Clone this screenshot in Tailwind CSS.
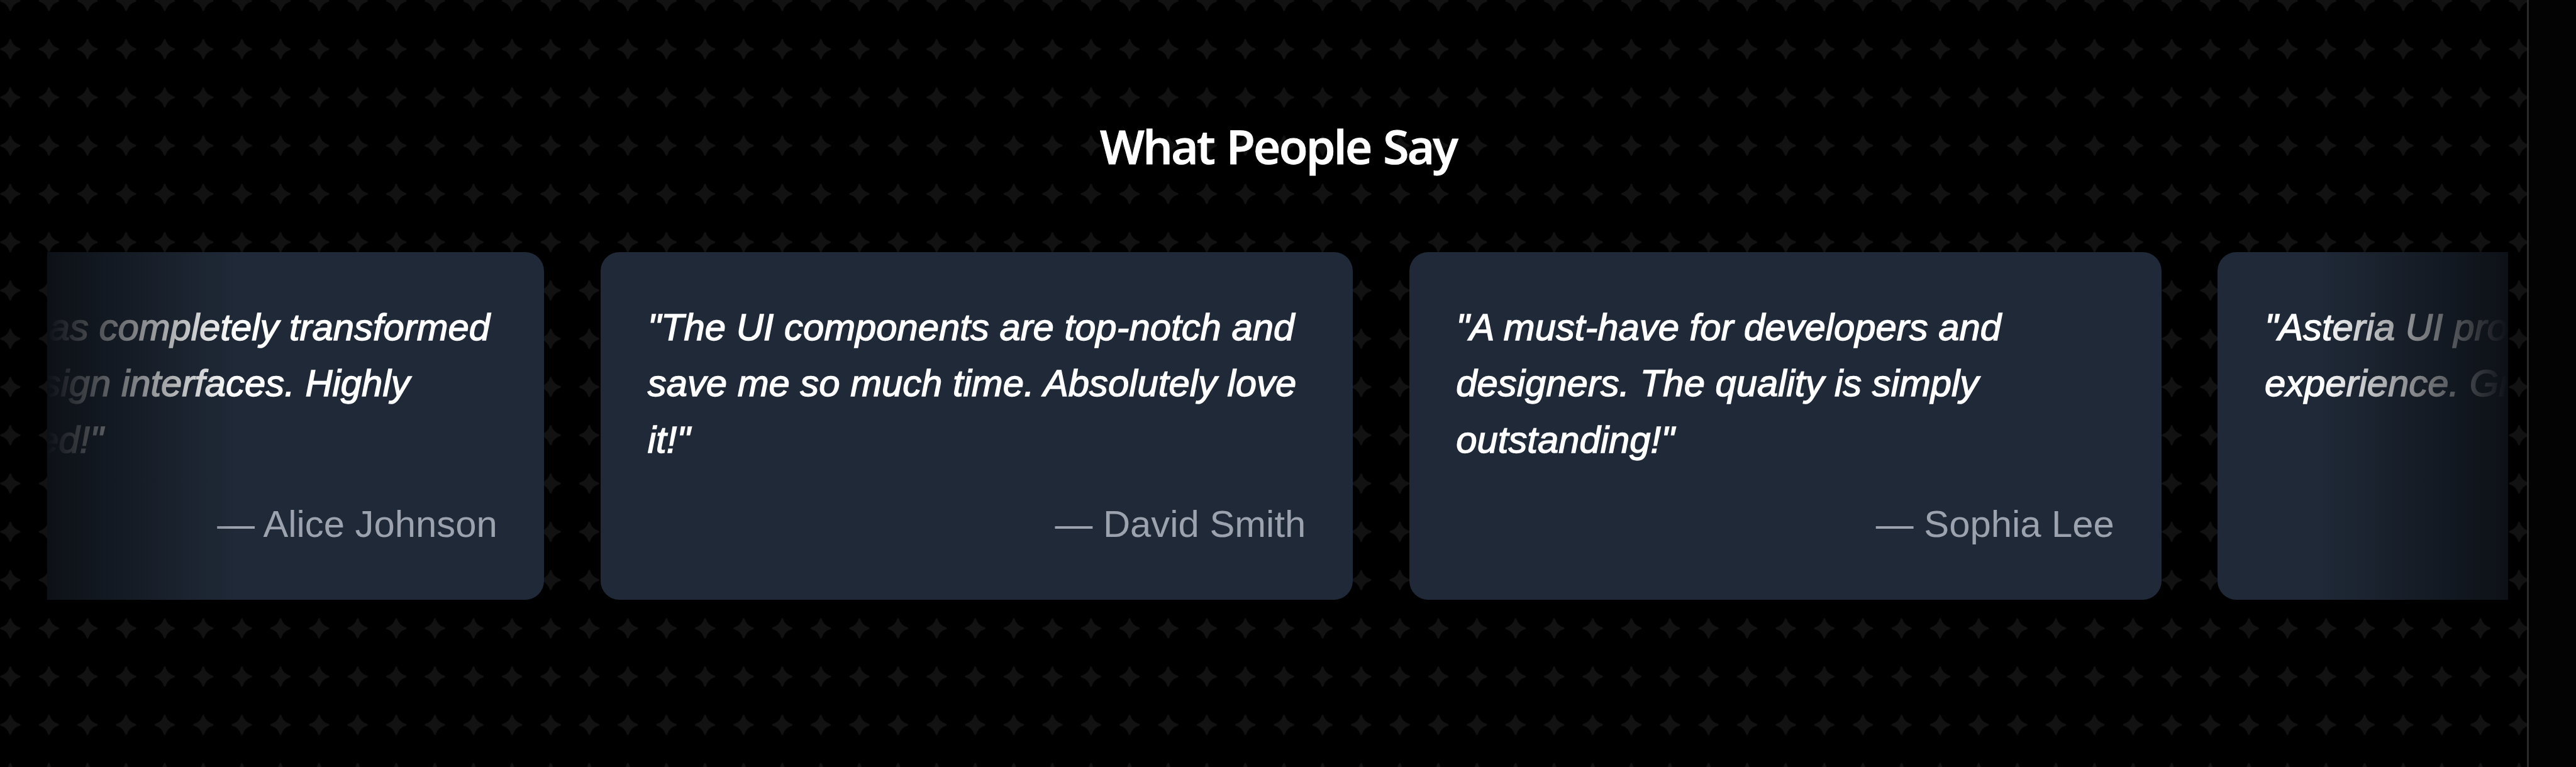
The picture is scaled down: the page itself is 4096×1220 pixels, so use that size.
<!DOCTYPE html>
<html lang="en">
<head>
<meta charset="utf-8">
<title>Testimonials</title>
<script src="https://cdn.jsdelivr.net/npm/@tailwindcss/browser@4"></script>
</head>
<body class="relative flex h-[1220px] w-[4096px] overflow-hidden bg-black">
<svg class="absolute inset-0 h-full w-full" aria-hidden="true">
<defs><pattern id="stars" x="-14.3" y="-37" width="61.37" height="76.77" patternUnits="userSpaceOnUse">
<path transform="translate(30.7 38.4)" fill="#121212" d="M-1-16H1Q4-4.5 16-1V1Q4 4.5 1 16H-1Q-4 4.5-16 1V-1Q-4-4.5-1-16Z"/></pattern></defs>
<rect width="4019" height="1220" fill="url(#stars)"/>
</svg>
<main class="relative flex w-[4021px] shrink-0 flex-col border-r-[3px] border-[#2a2a2a] pt-[182px] pr-[28px] pl-[75px]">
<h2 class="h-[219px] text-center font-['Open_Sans','Noto_Sans',sans-serif] text-[75px] leading-[100px] font-semibold tracking-[-2.7px] text-white [word-spacing:3px] [-webkit-text-stroke:1px_white]">What People Say</h2>
<section class="relative flex h-[553px] w-[3913px] overflow-hidden font-['Liberation_Sans',Arial,sans-serif] text-[59.8px] leading-[89.7px]">
<div class="-ml-[405.5px] flex shrink-0 gap-[89.7px] text-white">
<article class="flex w-[1195.9px] shrink-0 flex-col rounded-[30px] bg-[#1f2937] px-[74.7px] pt-[74.7px]">
<p class="h-[313.6px] whitespace-nowrap italic [-webkit-text-stroke:1.4px_white]">"Asteria UI has completely transformed<br>the way I design interfaces. Highly<br>recommended!"</p>
<p class="text-right text-[#9ca3af]">— Alice Johnson</p>
</article>
<article class="flex w-[1195.9px] shrink-0 flex-col rounded-[30px] bg-[#1f2937] px-[74.7px] pt-[74.7px]">
<p class="h-[313.6px] whitespace-nowrap italic [-webkit-text-stroke:1.4px_white]">"The UI components are top-notch and<br>save me so much time. Absolutely love<br>it!"</p>
<p class="text-right text-[#9ca3af]">— David Smith</p>
</article>
<article class="flex w-[1195.9px] shrink-0 flex-col rounded-[30px] bg-[#1f2937] px-[74.7px] pt-[74.7px]">
<p class="h-[313.6px] whitespace-nowrap italic [-webkit-text-stroke:1.4px_white]">"A must-have for developers and<br>designers. The quality is simply<br>outstanding!"</p>
<p class="text-right text-[#9ca3af]">— Sophia Lee</p>
</article>
<article class="flex w-[1195.9px] shrink-0 flex-col rounded-[30px] bg-[#1f2937] px-[74.7px] pt-[74.7px]">
<p class="h-[313.6px] whitespace-nowrap italic [-webkit-text-stroke:1.4px_white]">"Asteria UI provides a seamless<br>experience. Great work!"</p>
</article>
</div>
<div class="absolute inset-y-0 left-0 w-[299px] bg-linear-to-r/srgb from-[#0d1117] to-transparent"></div>
<div class="absolute inset-y-0 right-0 w-[299px] bg-linear-to-l/srgb from-[#0d1117] to-transparent"></div>
</section>
</main>
<aside class="grow bg-[#030303]"></aside>
</body>
</html>
